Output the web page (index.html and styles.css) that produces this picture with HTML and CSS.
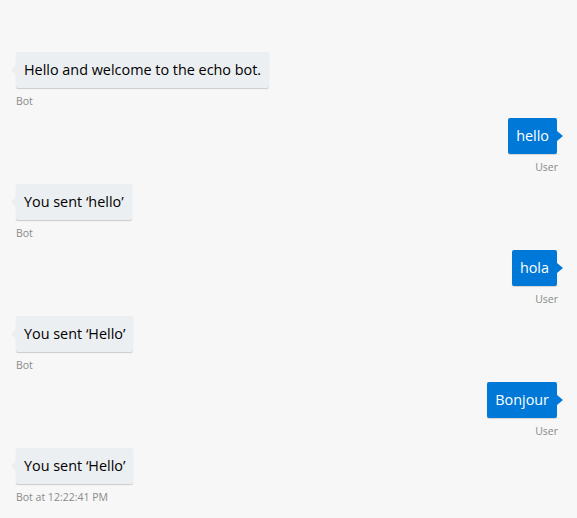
FILE: index.html
```html
<!DOCTYPE html>
<html>
<head>
<meta charset="utf-8">
<link rel="stylesheet" href="styles.css">
</head>
<body>
<div class="chat">
  <div class="msg bot"><div class="bubble">Hello and welcome to the echo bot.</div><div class="label">Bot</div></div>
  <div class="msg user"><div class="bubble">hello</div><div class="label">User</div></div>
  <div class="msg bot"><div class="bubble">You sent ‘hello’</div><div class="label">Bot</div></div>
  <div class="msg user"><div class="bubble">hola</div><div class="label">User</div></div>
  <div class="msg bot"><div class="bubble">You sent ‘Hello’</div><div class="label">Bot</div></div>
  <div class="msg user"><div class="bubble">Bonjour</div><div class="label">User</div></div>
  <div class="msg bot"><div class="bubble">You sent ‘Hello’</div><div class="label">Bot at 12:22:41 PM</div></div>
</div>
</body>
</html>
```
FILE: styles.css
```css
html, body {
  margin: 0;
  padding: 0;
  background: #f7f7f7;
  height: 100%;
}
body {
  font-family: "Open Sans", "Noto Sans", sans-serif;
}
.chat {
  display: flex;
  flex-direction: column;
  padding: 52px 20px 0 16px;
}
.msg {
  display: flex;
  flex-direction: column;
  margin-bottom: 9px;
}
.msg.bot { align-items: flex-start; }
.msg.user { align-items: flex-end; }
.bubble {
  position: relative;
  height: 36px;
  box-sizing: border-box;
  padding: 8px 8px;
  font-size: 14.4px;
  line-height: 20px;
  border-radius: 2px;
}
.bot .bubble {
  background: #eceff1;
  color: #000;
  box-shadow: 0 1px 1px rgba(0,0,0,0.18);
}
.user .bubble {
  background: #0078d7;
  color: #fff;
  box-shadow: 0 1px 1px rgba(0,0,0,0.15);
}
.bot .bubble::before {
  content: "";
  position: absolute;
  left: -5px;
  top: 13px;
  border-top: 5px solid transparent;
  border-bottom: 5px solid transparent;
  border-right: 5px solid #eceff1;
}
.user .bubble::after {
  content: "";
  position: absolute;
  right: -6px;
  top: 13px;
  border-top: 5px solid transparent;
  border-bottom: 5px solid transparent;
  border-left: 6px solid #0078d7;
}
.label {
  margin-top: 5px;
  font-size: 10.5px;
  line-height: 16px;
  color: #8a8a8a;
}
.user .label { margin-right: -1px; }
```
